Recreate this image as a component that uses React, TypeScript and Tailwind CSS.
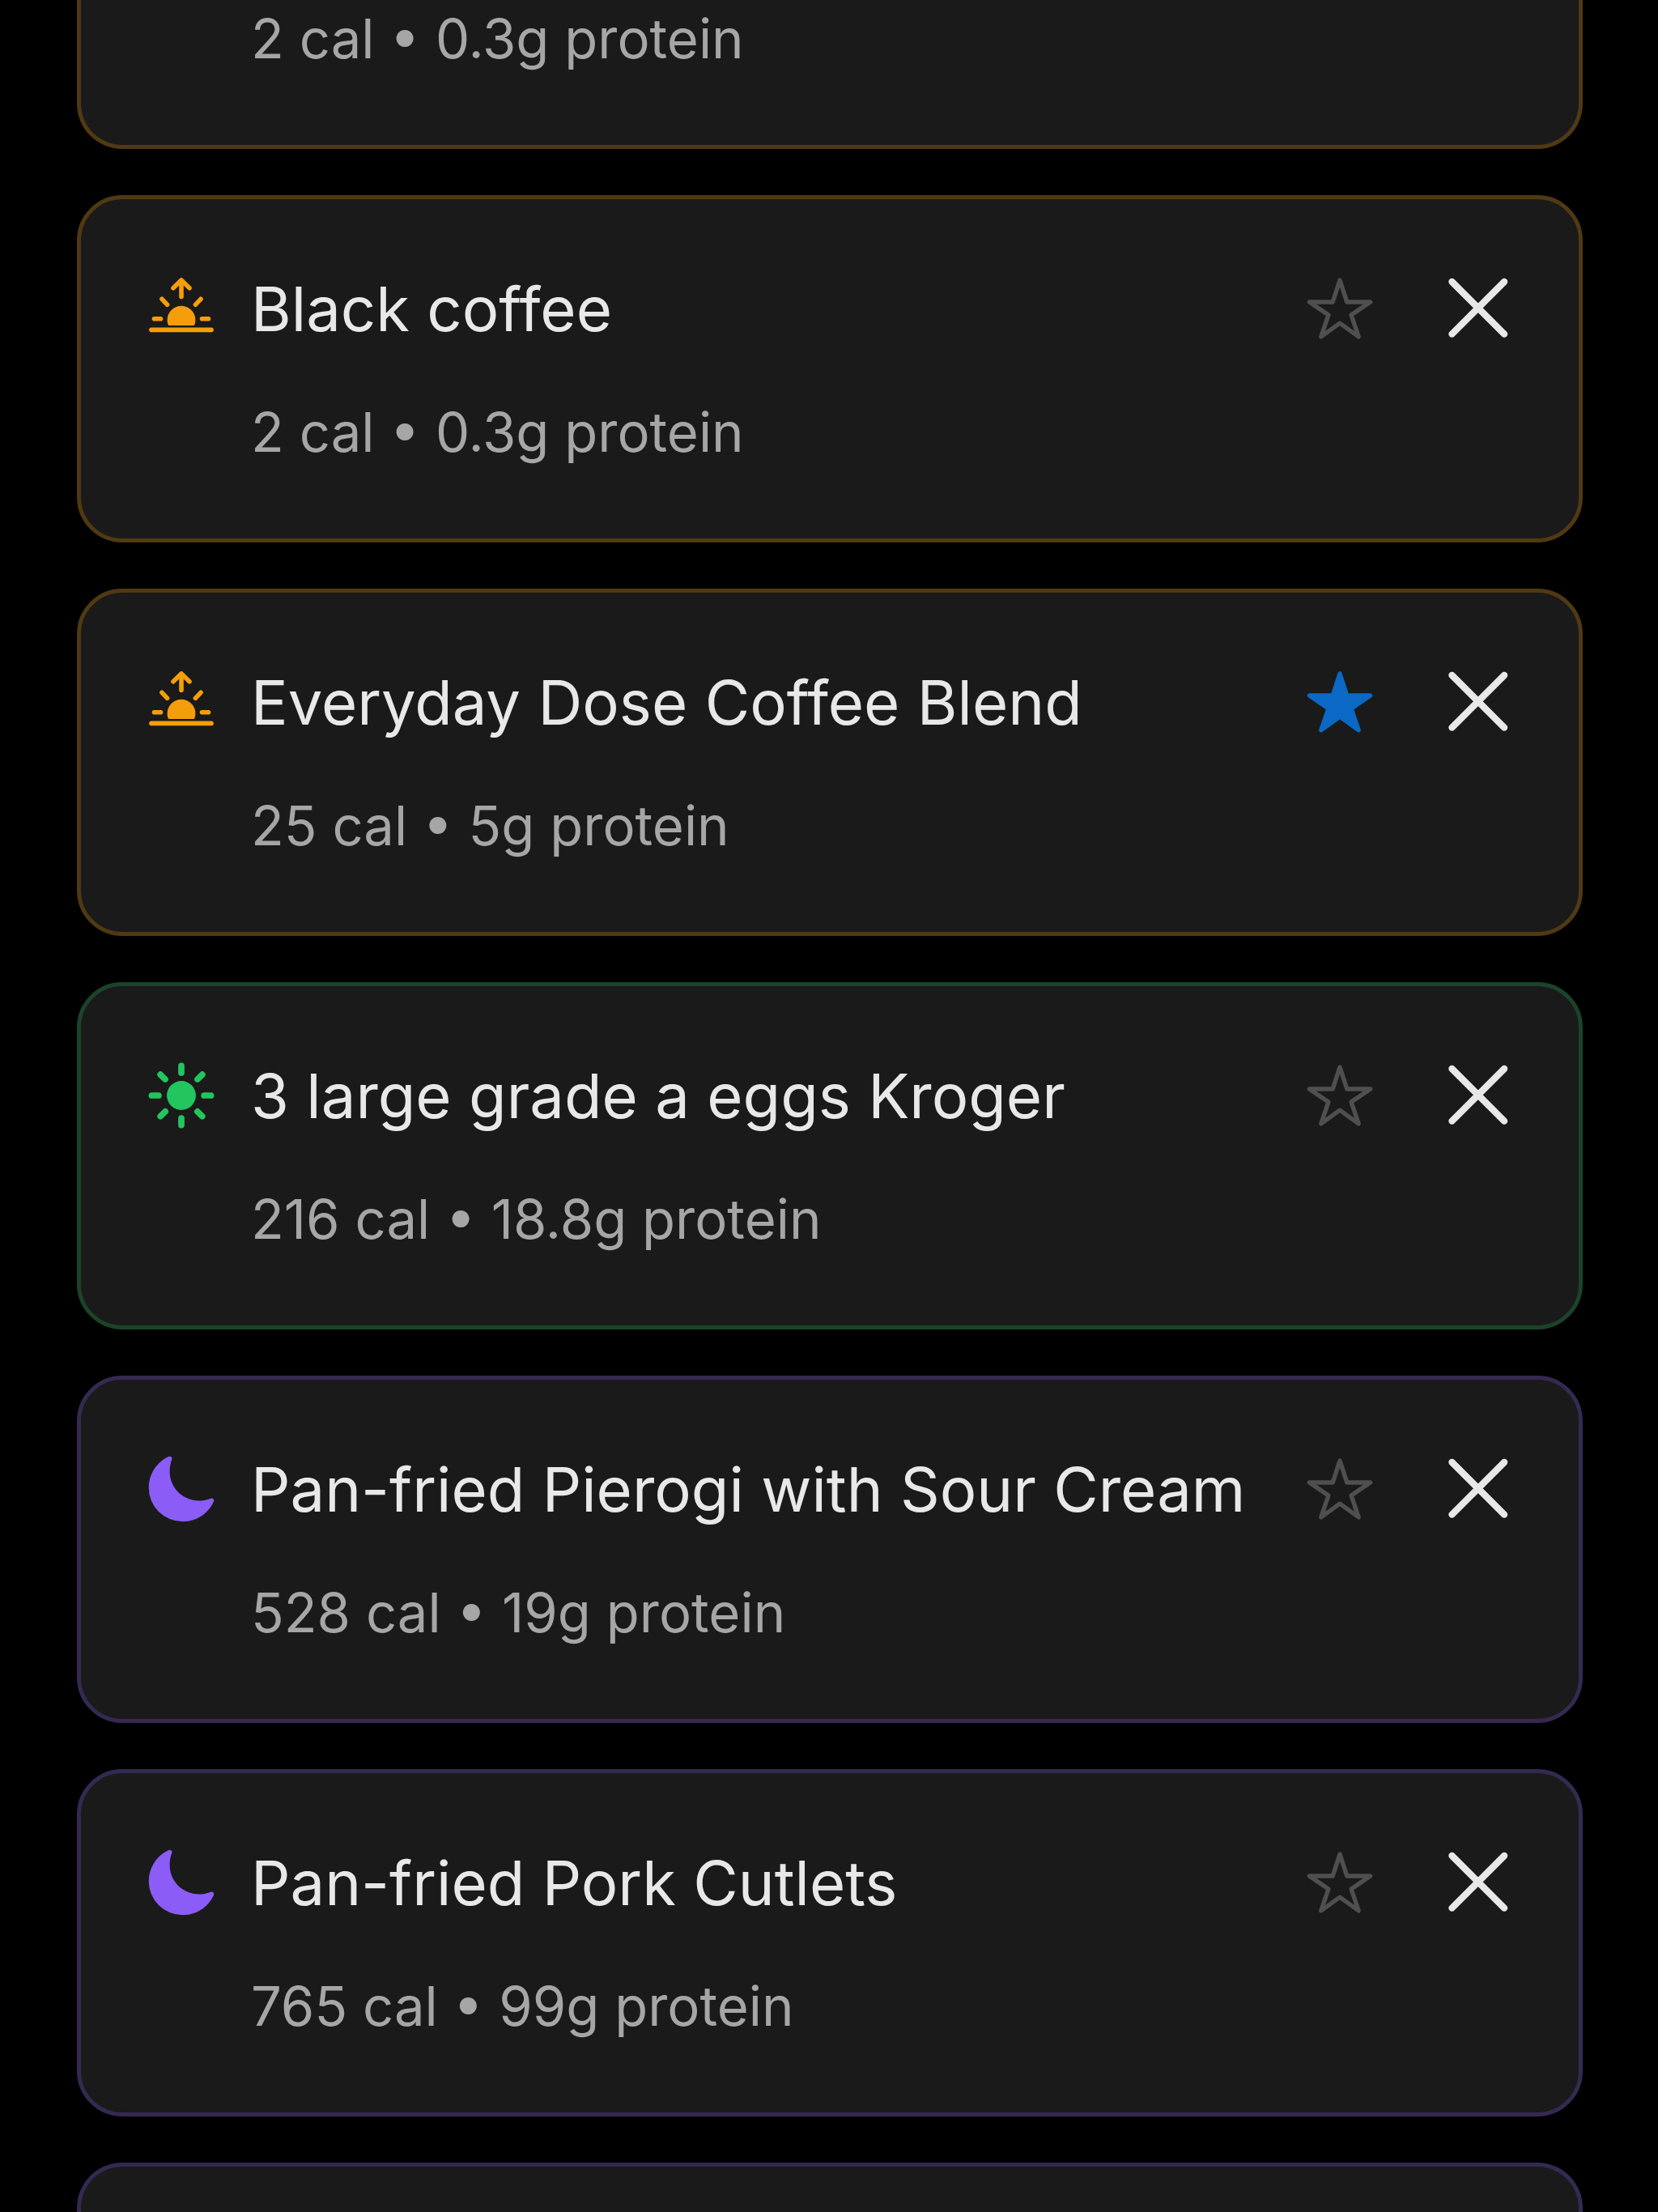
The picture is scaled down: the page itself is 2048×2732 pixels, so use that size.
import { useState } from "react";
import clsx from "clsx";
import { IoMoon, IoStar, IoStarOutline, IoSunny } from "react-icons/io5";

type Meal = "breakfast" | "lunch" | "dinner";

interface FoodEntry {
  id: number;
  name: string;
  meal: Meal;
  calories: number;
  protein: number;
  favorite?: boolean;
}

const entries: FoodEntry[] = [
  { id: 1, name: "Black coffee", meal: "breakfast", calories: 2, protein: 0.3 },
  {
    id: 2,
    name: "Everyday Dose Coffee Blend",
    meal: "breakfast",
    calories: 25,
    protein: 5,
    favorite: true,
  },
  {
    id: 3,
    name: "3 large grade a eggs Kroger",
    meal: "lunch",
    calories: 216,
    protein: 18.8,
  },
  {
    id: 4,
    name: "Pan-fried Pierogi with Sour Cream",
    meal: "dinner",
    calories: 528,
    protein: 19,
  },
  {
    id: 5,
    name: "Pan-fried Pork Cutlets",
    meal: "dinner",
    calories: 765,
    protein: 99,
  },
];

const borderColors: Record<Meal, string> = {
  breakfast: "border-[#503913]",
  lunch: "border-[#1a442a]",
  dinner: "border-[#352951]",
};

const SunriseIcon = () => (
  <svg
    viewBox="0 0 92 92"
    className="size-[92px] shrink-0 text-[#f59e0b]"
    fill="none"
    stroke="currentColor"
    strokeWidth="5.6"
    strokeLinecap="round"
    strokeLinejoin="round"
    aria-hidden="true"
  >
    <path d="M46 11V31.5M36 20.7L46 11l10 9.7" />
    <path d="M22 34.3l6.6 7M70 34.3l-6.6 7M12.5 58.7h8M71.5 58.7h8" />
    <path d="M9 72.4h74" />
    <path
      d="M31 67.1a2 2 0 0 1-1.5-1.4A17.4 17.4 0 1 1 62.5 65.7a2 2 0 0 1-1.5 1.4z"
      fill="currentColor"
      stroke="none"
    />
  </svg>
);

const MealIcon = ({ meal }: { meal: Meal }) => {
  if (meal === "breakfast") return <SunriseIcon />;
  if (meal === "lunch")
    return <IoSunny className="size-[92px] shrink-0 p-px text-[#22c55e]" />;
  return <IoMoon className="size-[92px] shrink-0 text-[#8b5cf6]" />;
};

const Macros = ({ calories, protein }: { calories: number; protein: number }) => (
  <p className="pl-[132px] text-[67px] leading-[96px] text-[#a6a6a6]">
    {calories} cal • {protein}g protein
  </p>
);

const FoodCard = ({ entry }: { entry: FoodEntry }) => {
  const [favorite, setFavorite] = useState(Boolean(entry.favorite));

  return (
    <li
      className={clsx(
        "rounded-[56px] border-5 bg-[#1a1a1a] px-[78px] pt-[79px] pb-[83px]",
        borderColors[entry.meal],
      )}
    >
      <div className="flex items-center">
        <MealIcon meal={entry.meal} />
        <h2 className="ml-10 min-w-0 flex-1 truncate text-[76px] leading-[112px] text-[#e8e8e8]">
          {entry.name}
        </h2>
        <button
          type="button"
          aria-label="Favorite"
          aria-pressed={favorite}
          onClick={() => setFavorite(!favorite)}
          className="shrink-0"
        >
          {favorite ? (
            <IoStar className="size-[86px] text-[#0b68c5]" />
          ) : (
            <IoStarOutline className="size-[86px] text-[#4f4f4f]" />
          )}
        </button>
        <button type="button" aria-label="Remove" className="ml-[82px] shrink-0">
          <svg
            viewBox="0 0 92 92"
            className="size-[92px] text-[#e8e8e8]"
            stroke="currentColor"
            strokeWidth="8.4"
            strokeLinecap="round"
          >
            <path d="M13.5 13l64.6 64.6M78.1 13L13.5 77.6" />
          </svg>
        </button>
      </div>
      <div className="mt-[49px]">
        <Macros calories={entry.calories} protein={entry.protein} />
      </div>
    </li>
  );
};

const App = () => {
  return (
    <main className="min-h-screen bg-black font-['Inter',sans-serif]">
      <ul className="flex min-h-screen flex-col gap-[57px] pr-[93px] pl-[95px]">
        {/* tail of the entry scrolled off the top */}
        <li className="rounded-b-[56px] border-5 border-t-0 border-[#503913] bg-[#1a1a1a] px-[78px] pb-[83px]">
          <Macros calories={2} protein={0.3} />
        </li>
        {entries.map((entry) => (
          <FoodCard key={entry.id} entry={entry} />
        ))}
        <li className="flex-1 rounded-t-[56px] border-5 border-b-0 border-[#352951] bg-[#1a1a1a]" />
      </ul>
    </main>
  );
};

export default App;
